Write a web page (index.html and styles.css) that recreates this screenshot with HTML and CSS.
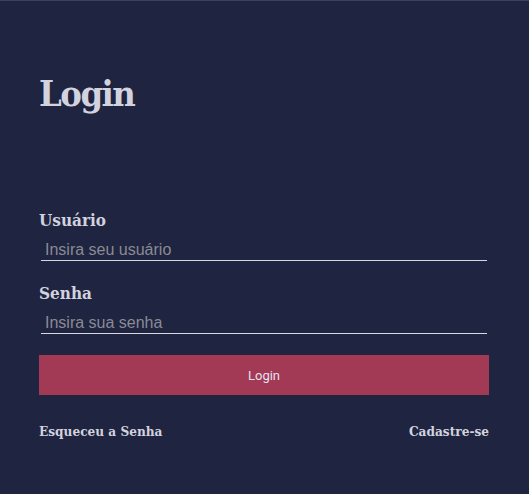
FILE: index.html
```html
<!DOCTYPE html>
<html lang="pt">
<head>
<meta charset="utf-8">
<link rel="stylesheet" href="styles.css">
</head>
<body>
<main class="login">
  <h1 class="title">Login</h1>
  <form class="form">
    <label class="field">
      <span class="label">Usuário</span>
      <input class="input" type="text" placeholder="Insira seu usuário">
    </label>
    <label class="field">
      <span class="label">Senha</span>
      <input class="input" type="password" placeholder="Insira sua senha">
    </label>
    <button class="btn" type="button">Login</button>
  </form>
  <div class="links">
    <a class="link" href="#">Esqueceu a Senha</a>
    <a class="link" href="#">Cadastre-se</a>
  </div>
</main>
</body>
</html>
```
FILE: styles.css
```css
html, body {
  margin: 0;
  height: 100%;
  background: #1f2441;
}
body {
  border-top: 1px solid #3b4163;
  box-sizing: border-box;
  font-family: "DejaVu Serif Condensed", "DejaVu Serif", serif;
  color: #d2d3de;
}
.login {
  padding: 0 40px 0 39px;
}
.title {
  margin: 0;
  padding-top: 68px;
  font-size: 36px;
  line-height: 48px;
  font-weight: bold;
  letter-spacing: -1.5px;
}
.form {
  display: flex;
  flex-direction: column;
  margin-top: 92px;
}
.field {
  display: flex;
  flex-direction: column;
  margin-bottom: 21px;
}
.label {
  font-size: 17px;
  font-weight: bold;
  line-height: 22px;
}
.input {
  margin: 9px 2px 0 2px;
  padding: 0 4px;
  height: 21px;
  line-height: 20px;
  box-sizing: border-box;
  background: transparent;
  border: none;
  border-bottom: 1px solid #d8d8e0;
  font-family: "Liberation Sans", Arial, sans-serif;
  font-size: 16px;
  color: #d2d3de;
  outline: none;
}
.input::placeholder {
  color: #8a8b94;
}
.btn {
  margin-top: 0;
  height: 40px;
  border: none;
  background: #a23a55;
  color: #e6e1f0;
  font-family: Roboto, Arial, sans-serif;
  font-size: 13px;
}
.links {
  display: flex;
  justify-content: space-between;
  margin-top: 28px;
}
.link {
  font-size: 13.5px;
  font-weight: bold;
  color: #d2d3de;
  text-decoration: none;
}
```
